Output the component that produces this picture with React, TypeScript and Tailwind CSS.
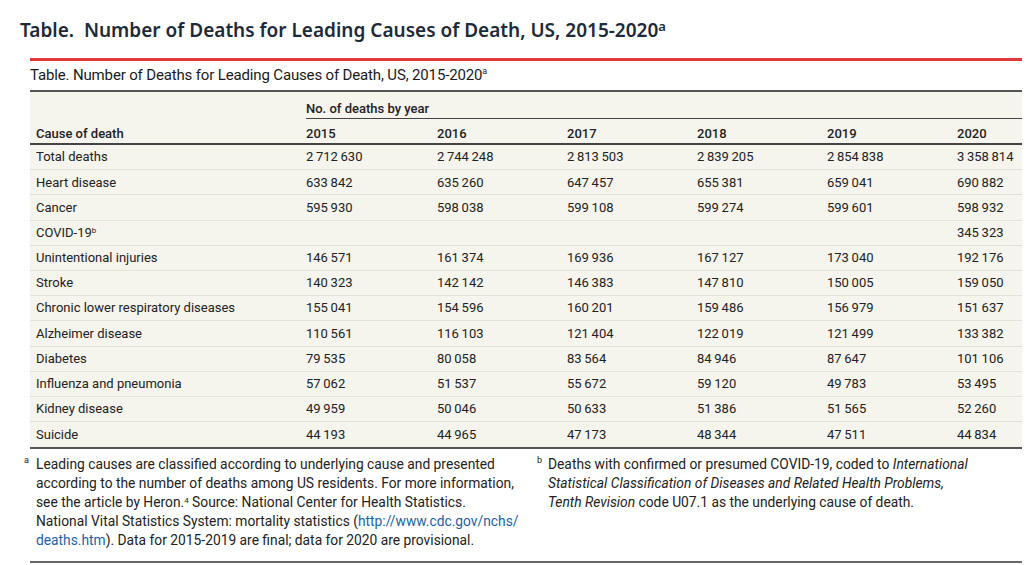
const rows: [string, string[]][] = [
  ["Total deaths", ["2 712 630", "2 744 248", "2 813 503", "2 839 205", "2 854 838", "3 358 814"]],
  ["Heart disease", ["633 842", "635 260", "647 457", "655 381", "659 041", "690 882"]],
  ["Cancer", ["595 930", "598 038", "599 108", "599 274", "599 601", "598 932"]],
  ["COVID-19", ["", "", "", "", "", "345 323"]],
  ["Unintentional injuries", ["146 571", "161 374", "169 936", "167 127", "173 040", "192 176"]],
  ["Stroke", ["140 323", "142 142", "146 383", "147 810", "150 005", "159 050"]],
  ["Chronic lower respiratory diseases", ["155 041", "154 596", "160 201", "159 486", "156 979", "151 637"]],
  ["Alzheimer disease", ["110 561", "116 103", "121 404", "122 019", "121 499", "133 382"]],
  ["Diabetes", ["79 535", "80 058", "83 564", "84 946", "87 647", "101 106"]],
  ["Influenza and pneumonia", ["57 062", "51 537", "55 672", "59 120", "49 783", "53 495"]],
  ["Kidney disease", ["49 959", "50 046", "50 633", "51 386", "51 565", "52 260"]],
  ["Suicide", ["44 193", "44 965", "47 173", "48 344", "47 511", "44 834"]],
];

const years = ["2015", "2016", "2017", "2018", "2019", "2020"];
const cols = "grid grid-cols-[276px_131px_130px_130px_130px_130px_65px]";

// thin spaces between digit groups, like the printed table
const fmt = (n: string) => n.replace(/ /g, "\u2009");

export default function App() {
  return (
    <div className="min-h-[565px] bg-white text-[#222]">
      <h1 className="pl-[20px] pt-[17px] font-['Noto_Sans',sans-serif] text-[19px] leading-[26px] font-semibold text-[#1d2a39]">
        Table.&nbsp; Number of Deaths for Leading Causes of Death, US, 2015-2020
        <sup className="text-[13px]">a</sup>
      </h1>

      <div className="ml-[30px] mt-[15px] w-[992px] font-['Roboto',sans-serif]">
        <div className="border-t-[3px] border-[#e2363c]" />
        <div className="flex h-[29px] items-center text-[15px] tracking-[-0.15px] text-[#1a1a1a]">
          Table. Number of Deaths for Leading Causes of Death, US, 2015-2020
          <sup className="text-[9px]">a</sup>
        </div>
        <div className="border-t-2 border-[#555]" />

        <div className="bg-[#f5f4ed] text-[13px]">
          <div className={cols}>
            <div />
            <div className="col-span-6 flex h-[27px] items-end border-b border-[#444] pb-[1px] leading-[16px] font-medium">
              No. of deaths by year
            </div>
          </div>
          <div className={`${cols} h-[26px] items-end border-b-2 border-[#444] pb-[1px] leading-[16px] font-medium`}>
            <div className="pl-[6px]">Cause of death</div>
            {years.map((y) => (
              <div key={y}>{y}</div>
            ))}
          </div>
          {rows.map(([name, vals], i) => (
            <div
              key={name}
              className={`${cols} h-[25.2px] items-center ${i < rows.length - 1 ? "border-b border-[#e4e2d9]" : ""}`}
            >
              <div className="pl-[6px]">
                {name}
                {name === "COVID-19" && <sup className="text-[8px]">b</sup>}
              </div>
              {vals.map((v, j) => (
                <div key={j}>{fmt(v)}</div>
              ))}
            </div>
          ))}
        </div>
        <div className="border-t-2 border-[#555]" />

        <div className="grid grid-cols-[507px_1fr] pt-[6px] text-[13.8px] leading-[19px]">
          <div className="-ml-[6px] flex">
            <span className="w-[12px] pt-[1px] text-[9px] leading-none">a</span>
            <p>
              Leading causes are classified according to underlying cause and presented
              <br />
              according to the number of deaths among US residents. For more information,
              <br />
              see the article by Heron.<sup className="text-[8px]">4</sup> Source: National Center for Health Statistics.
              <br />
              National Vital Statistics System: mortality statistics (
              <span className="text-[#1d5fa8]">http://www.cdc.gov/nchs/</span>
              <br />
              <span className="text-[#1d5fa8]">deaths.htm</span>). Data for 2015-2019 are final; data for 2020 are provisional.
            </p>
          </div>
          <div className="flex">
            <span className="w-[11px] pt-[1px] text-[9px] leading-none">b</span>
            <p>
              Deaths with confirmed or presumed COVID-19, coded to <i>International</i>
              <br />
              <i>Statistical Classification of Diseases and Related Health Problems,</i>
              <br />
              <i>Tenth Revision</i> code U07.1 as the underlying cause of death.
            </p>
          </div>
        </div>
        <div className="mt-[11px] border-t-2 border-[#666]" />
      </div>
    </div>
  );
}
